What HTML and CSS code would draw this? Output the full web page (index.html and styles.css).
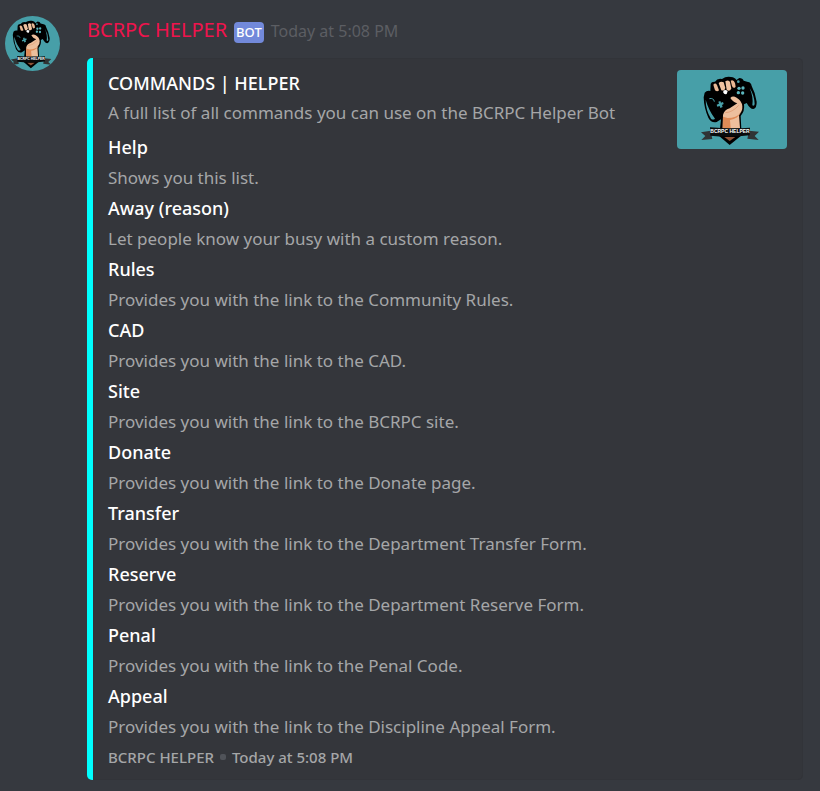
FILE: index.html
```html
<!DOCTYPE html>
<html lang="en">

<head>
    <meta charset="UTF-8">
    <meta name="viewport" content="width=device-width, initial-scale=1.0">
    <title>BCRPC Helper</title>
    <link rel="stylesheet" href="styles.css">
</head>

<body>

    <svg class="sprite" aria-hidden="true">
        <symbol id="logo" viewBox="21 30 330 237" preserveAspectRatio="xMidYMid slice">
            <rect x="0" y="0" width="380" height="300" fill="#479fa8"/>
            <!-- controller -->
            <path d="M104 98 Q110 91 121 93 L122 72 Q124 64 135 65 Q142 54 156 57 Q168 48 183 51 Q195 52 199 60 L208 54 Q218 54 221 62 L234 66 Q243 67 245 78 Q256 98 260 125 Q261 143 250 147 Q240 147 230 129 L222 133 Q225 153 212 168 L214 206 L150 206 L153 178 L140 186 Q124 190 115 173 Q102 145 101 112 Z" fill="#000"/>
            <path d="M107 119 Q107 151 123 176 Q129 181 135 176 Q116 151 107 119 Z" fill="#479fa8"/>
            <path d="M239 84 Q253 106 254 132 Q253 140 247 136 Q251 113 239 84 Z" fill="#479fa8"/>
            <path d="M118 116 Q131 113 133 125" fill="none" stroke="#479fa8" stroke-width="3"/>
            <path d="M145 125 L151 123 L153 128 L159 126 L161 132 L156 135 L158 141 L151 144 L149 138 L142 140 L140 134 L147 131 Z" fill="#479fa8"/>
            <g fill="#5bb5bd">
                <circle cx="207" cy="85" r="5"/>
                <circle cx="219" cy="84" r="5"/>
                <circle cx="205" cy="98" r="5"/>
                <circle cx="218" cy="99" r="5"/>
            </g>
            <circle cx="205" cy="65" r="4" fill="#479fa8"/>
            <!-- hand -->
            <path d="M130 74 Q136 67 141 75 L147 91 Q142 97 135 91 Z" fill="#e9b894"/>
            <path d="M146 69 Q153 62 161 67 L166 84 Q164 94 154 91 Z" fill="#efc3a1"/>
            <path d="M166 64 Q176 58 180 66 L184 86 Q178 96 170 89 Z" fill="#efc3a1"/>
            <path d="M182 62 Q191 58 195 69 L197 80 Q191 88 186 78 Z" fill="#e9b894"/>
            <path d="M160 92 Q167 87 173 94 L170 102 Q164 104 160 98 Z" fill="#fff"/>
            <path d="M181 114 Q188 106 200 113 Q216 122 217 139 Q218 154 207 164 L210 205 L158 205 L159 165 Q162 150 179 145 L202 130 Q188 126 181 114 Z" fill="#edbf9d"/>
            <path d="M159 170 L173 174 Q199 174 212 159 Q205 175 180 180 L182 205 L158 205 Z" fill="#df8b57"/>
            <path d="M166 158 Q188 157 206 136" fill="none" stroke="#d99167" stroke-width="2"/>
            <!-- ribbon -->
            <path d="M93 217 L122 212 L127 237 L94 240 L106 228 Z" fill="#303435"/>
            <path d="M267 215 L237 212 L232 236 L266 240 L254 228 Z" fill="#303435"/>
            <path d="M143 224 L217 224 L179 255 Z" fill="#000"/>
            <path d="M163 231 L196 231 L179 243 Z" fill="#8f5438"/>
            <path d="M120 202 Q180 208 240 203 L239 226 Q180 233 121 227 Z" fill="#090b0c"/>
            <text class="logo-text" x="180" y="219" text-anchor="middle">BCRPC HELPER</text>
        </symbol>
    </svg>

    <article class="message">
        <svg class="avatar" role="img" aria-label="BCRPC Helper avatar"><use href="#logo"/></svg>
        <div class="content">
            <header class="message-header">
                <span class="username">BCRPC HELPER</span>
                <span class="bot-tag">BOT</span>
                <time class="timestamp">Today at 5:08 PM</time>
            </header>

            <section class="embed">
                <div class="embed-top">
                    <div class="embed-intro">
                        <h1 class="embed-title">COMMANDS | HELPER</h1>
                        <p class="embed-description">A full list of all commands you can use on the BCRPC Helper Bot</p>
                    </div>
                    <svg class="thumbnail" role="img" aria-label="BCRPC Helper logo"><use href="#logo"/></svg>
                </div>
                <dl class="fields">
                    <dt>Help</dt>
                    <dd>Shows you this list.</dd>
                    <dt>Away (reason)</dt>
                    <dd>Let people know your busy with a custom reason.</dd>
                    <dt>Rules</dt>
                    <dd>Provides you with the link to the Community Rules.</dd>
                    <dt>CAD</dt>
                    <dd>Provides you with the link to the CAD.</dd>
                    <dt>Site</dt>
                    <dd>Provides you with the link to the BCRPC site.</dd>
                    <dt>Donate</dt>
                    <dd>Provides you with the link to the Donate page.</dd>
                    <dt>Transfer</dt>
                    <dd>Provides you with the link to the Department Transfer Form.</dd>
                    <dt>Reserve</dt>
                    <dd>Provides you with the link to the Department Reserve Form.</dd>
                    <dt>Penal</dt>
                    <dd>Provides you with the link to the Penal Code.</dd>
                    <dt>Appeal</dt>
                    <dd>Provides you with the link to the Discipline Appeal Form.</dd>
                </dl>
                <footer class="embed-footer">
                    <span>BCRPC HELPER</span>
                    <span class="dot"></span>
                    <time>Today at 5:08 PM</time>
                </footer>
            </section>
        </div>
    </article>

</body>

</html>
```
FILE: styles.css
```css
* {
    box-sizing: border-box;
}

body {
    margin: 0;
    background: #36393f;
    color: #a5a6a8;
    font-family: "Noto Sans", "Open Sans", sans-serif;
    font-size: 17px;
}

.sprite {
    display: none;
}

.logo-text {
    fill: #fff;
    font-family: "Liberation Sans", sans-serif;
    font-size: 15px;
    font-weight: bold;
}

.message {
    display: flex;
    gap: 27px;
    padding: 16px 17px 12px 5px;
}

.avatar {
    flex: none;
    width: 55px;
    height: 55px;
    border-radius: 50%;
}

.content {
    flex: 1;
    min-width: 0;
}

.message-header {
    display: flex;
    align-items: baseline;
    gap: 7px;
    height: 30px;
    margin-bottom: 12px;
}

.username {
    color: #f0134d;
    font-size: 20px;
    line-height: 28px;
}

.bot-tag {
    padding: 0 2px;
    border-radius: 4px;
    background: #7289da;
    color: #fff;
    font-size: 13px;
    font-weight: 500;
    line-height: 21px;
}

.timestamp {
    color: #5c5e63;
    font-size: 16px;
}

.embed {
    padding: 12px 16px 8px 15px;
    border-left: 6px solid #00ffff;
    border-radius: 5px;
    background: #34363b;
    box-shadow: inset 0 0 0 1px #323439;
}

.embed-top {
    display: flex;
    justify-content: space-between;
    gap: 16px;
}

.embed-intro {
    padding-bottom: 3px;
}

.embed-title,
.embed-description {
    margin: 0;
}

.embed-title {
    color: #fff;
    font-size: 18px;
    font-weight: 500;
    line-height: 27px;
}

.embed-description {
    line-height: 32px;
}

/* the thumbnail is taller than the intro, the fields start beside it */
.thumbnail {
    flex: none;
    width: 110px;
    height: 79px;
    margin-bottom: -20px;
    border-radius: 4px;
}

.fields {
    margin: 0;
}

.fields dt {
    color: #fff;
    font-size: 18px;
    font-weight: 500;
    line-height: 30px;
}

.fields dd {
    margin: 0;
    line-height: 31px;
}

.embed-footer {
    display: flex;
    align-items: center;
    gap: 6px;
    font-size: 15px;
    font-weight: 500;
    line-height: 30px;
}

.dot {
    width: 6px;
    height: 6px;
    border-radius: 2px;
    background: #505359;
}
```
